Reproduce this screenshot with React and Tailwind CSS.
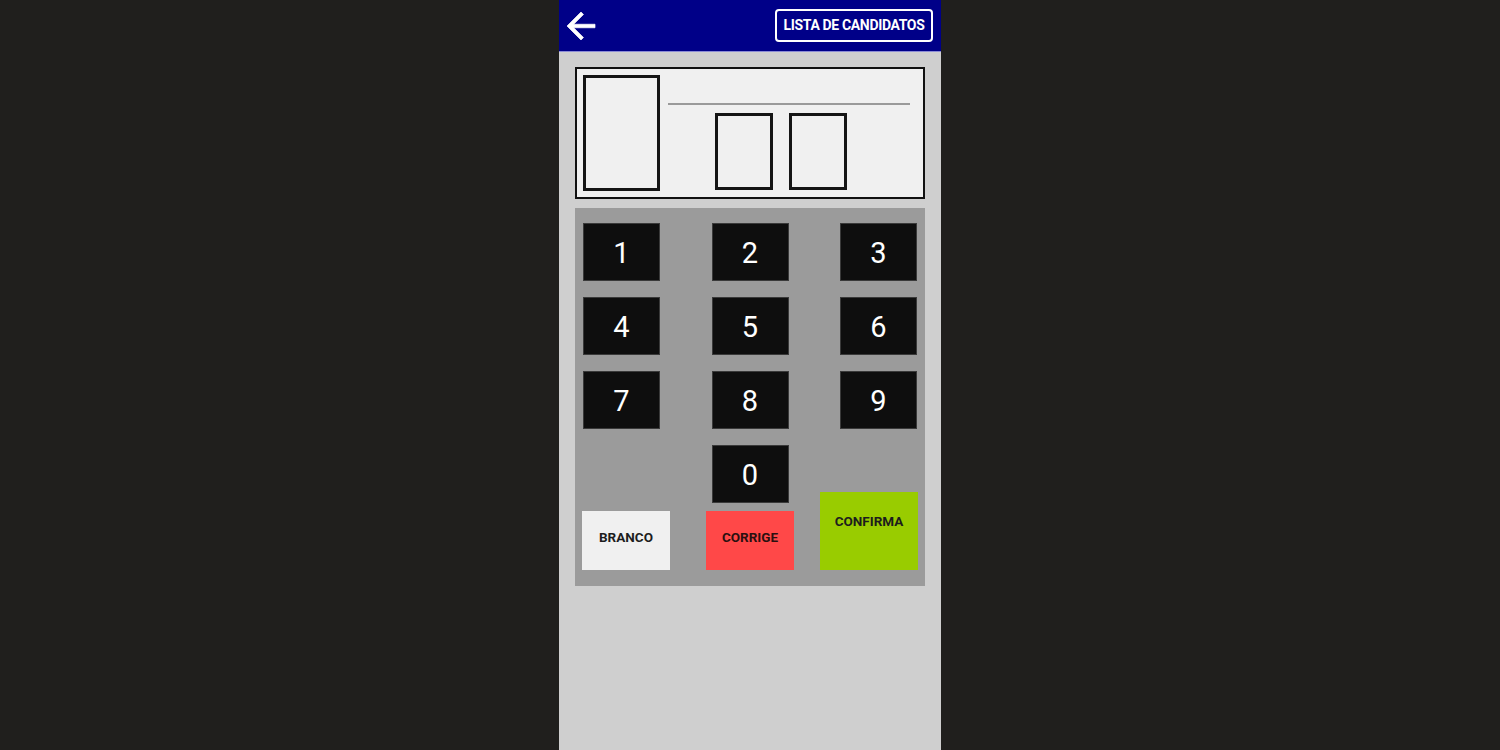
import React from 'react';

const rows = [['1', '2', '3'], ['4', '5', '6'], ['7', '8', '9']];

function Key({ label }) {
  return (
    <button className="w-[77px] h-[58px] bg-[#0e0e0e] border border-[#3a3a3a] text-white text-[29px] leading-none flex items-center justify-center pt-[3px]">
      {label}
    </button>
  );
}

export default function App() {
  return (
    <div className="w-full h-[750px] bg-[#201f1d] flex justify-center font-['Roboto',sans-serif]">
      <div className="w-[382px] h-full bg-[#cfcfcf] flex flex-col">
        {/* Top bar */}
        <div className="h-[52px] bg-[#000088] border-b border-[#8c8cd6] flex items-center justify-between pl-[1px] pr-[8px]">
          <svg width="42" height="42" viewBox="0 0 24 24" fill="#ffffff" stroke="#ffffff" strokeWidth="0.4">
            <path d="M20 11H7.83l5.59-5.59L12 4l-8 8 8 8 1.41-1.41L7.83 13H20v-2z" />
          </svg>
          <button className="w-[158px] h-[33px] border-2 border-white rounded-[4px] text-white text-[14px] font-bold tracking-tight">
            LISTA DE CANDIDATOS
          </button>
        </div>

        <div className="px-4 pt-[15px]">
          {/* Display */}
          <div className="h-[132px] border-2 border-[#111] bg-[#f0f0f0] flex p-[6px]">
            <div className="w-[77px] h-[116px] border-[3px] border-[#151515]" />
            <div className="flex-1 flex flex-col pl-2 pr-[7px]">
              <div className="mt-[28px] h-[2px] bg-[#9a9a9a]" />
              <div className="flex mt-[8px] pl-[47px] gap-4">
                <div className="w-[58px] h-[77px] border-[3px] border-[#151515]" />
                <div className="w-[58px] h-[77px] border-[3px] border-[#151515]" />
              </div>
            </div>
          </div>

          {/* Keypad */}
          <div className="mt-[9px] bg-[#9b9b9b] pt-[15px] pb-4 flex flex-col gap-4">
            {rows.map((row) => (
              <div key={row[0]} className="flex justify-between px-2">
                {row.map((k) => (
                  <Key key={k} label={k} />
                ))}
              </div>
            ))}
            <div className="flex items-end px-[7px]">
              <button className="w-[88px] h-[59px] bg-[#f0f0f0] text-[#1d1d1d] text-[13.5px] font-bold pb-[6px]">
                BRANCO
              </button>
              <div className="ml-[36px] w-[88px] flex flex-col items-center gap-2">
                <Key label="0" />
                <button className="w-[88px] h-[59px] bg-[#ff4848] text-[#2a1010] text-[13.5px] font-bold pb-[6px]">
                  CORRIGE
                </button>
              </div>
              <button className="ml-auto w-[98px] h-[78px] bg-[#99cc00] text-[#1d1d1d] text-[13.5px] font-bold flex justify-center pt-[19px]">
                CONFIRMA
              </button>
            </div>
          </div>
        </div>
      </div>
    </div>
  );
}
